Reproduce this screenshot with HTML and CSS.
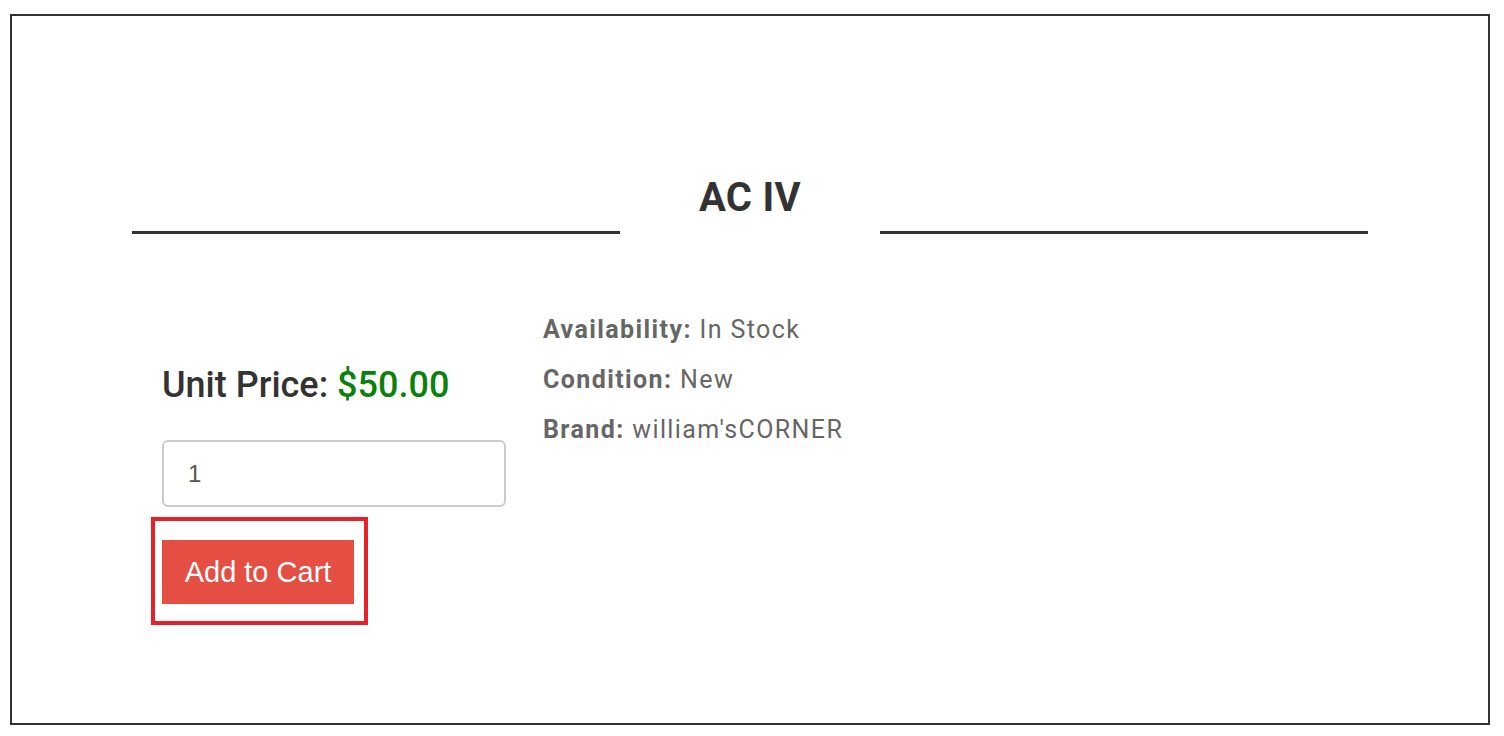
FILE: index.html
```html
<!DOCTYPE html>
<html lang="en">
<head>
<meta charset="utf-8">
<title>AC IV</title>
<link rel="stylesheet" href="styles.css">
</head>
<body>
<div class="frame">
  <div class="header">
    <div class="rule"></div>
    <h2 class="title">AC IV</h2>
    <div class="rule"></div>
  </div>
  <div class="product">
    <div class="buy">
      <div class="price">Unit Price: <span class="amount">$50.00</span></div>
      <input class="qty" type="text" value="1">
      <div class="highlight">
        <button class="cart" type="button">Add to Cart</button>
      </div>
    </div>
    <ul class="details">
      <li><b>Availability:</b> In Stock</li>
      <li><b>Condition:</b> New</li>
      <li><b>Brand:</b> william'sCORNER</li>
    </ul>
  </div>
</div>
</body>
</html>
```
FILE: styles.css
```css
* { box-sizing: border-box; }
html, body { margin: 0; padding: 0; background: #fff; }
body { font-family: Roboto, "Liberation Sans", sans-serif; color: #333; }

.frame {
  margin: 14px 0 0 10px;
  width: 1480px;
  height: 711px;
  border: 2px solid #333;
  padding: 158px 120px 0 120px;
}

.header {
  display: grid;
  grid-template-columns: 1fr 260px 1fr;
  align-items: end;
}
.rule { height: 3px; background: #333; }
.title {
  margin: 0 0 12px;
  font-size: 40px;
  line-height: 48px;
  font-weight: 700;
  text-align: center;
  color: #333;
  letter-spacing: 0.3px;
}

.product {
  display: flex;
  margin-top: 71px;
  padding-left: 30px;
  gap: 37px;
}
.buy {
  width: 344px;
  padding-top: 59px;
  display: flex;
  flex-direction: column;
  align-items: flex-start;
}
.price {
  font-size: 36px;
  line-height: 42px;
  font-weight: 500;
  color: #333;
  margin-bottom: 34px;
}
.amount { color: #0b800b; }

.qty {
  width: 344px;
  height: 67px;
  border: 2px solid #ccc;
  border-radius: 6px;
  padding: 0 24px;
  font-family: "Liberation Sans", Arial, sans-serif;
  font-size: 24px;
  color: #555;
  outline: none;
}

.highlight {
  margin: 10px 0 0 -11px;
  border: 4px solid #e8202a;
  padding: 19px 10px 17px 7px;
}
.cart {
  display: block;
  width: 192px;
  height: 64px;
  border: 0;
  border-radius: 0;
  background: #e44e43;
  color: #fff;
  font-family: "Liberation Sans", Arial, sans-serif;
  font-size: 29px;
  padding: 0;
}

.details {
  list-style: none;
  margin: 0;
  padding: 0;
  font-size: 25px;
  line-height: 50px;
  letter-spacing: 1.4px;
  color: #666;
}
.details b { font-weight: 700; }
```
